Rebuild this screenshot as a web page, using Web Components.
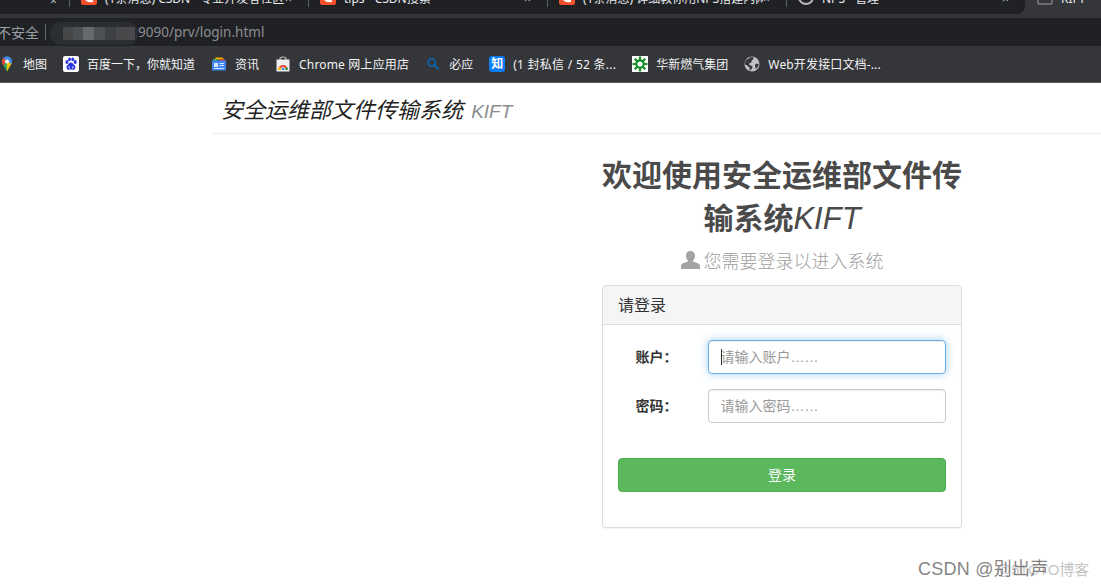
<!DOCTYPE html>
<html lang="zh-CN">
<head>
<meta charset="utf-8">
<title>KIFT</title>
<style>
  html, body { margin: 0; background: #fff; }
  body { height: 588px; overflow: hidden; font-family: "Liberation Sans", "Noto Sans CJK SC", sans-serif; }
</style>
</head>
<body>

<browser-chrome>
  <tab-strip>
    <browser-tab close>
      <csdn-icon slot="icon"></csdn-icon>
      (1条消息) CSDN - 专业开发者社区
    </browser-tab>
    <browser-tab close>
      <csdn-icon slot="icon"></csdn-icon>
      tips - CSDN搜索
    </browser-tab>
    <browser-tab close>
      <csdn-icon slot="icon"></csdn-icon>
      (1条消息) 详细教你用NPS搭建内网
    </browser-tab>
    <browser-tab close>
      <span slot="icon" class="globe"></span>
      NPS - 管理
    </browser-tab>
    <browser-tab slot="active" style="--w:76px">
      <span slot="icon" class="page"></span>
      KIFT
    </browser-tab>
  </tab-strip>
  <address-bar>9090/prv/login.html</address-bar>
  <bookmark-bar>
    <bookmark-item>
      <svg slot="icon" width="16" height="16" viewBox="0 0 16 16">
        <path d="M8 0.5C11 .5 13 2.8 13 5.5c0 1.6-.7 2.7-1.7 4L8 15.5 4.6 9.7C3.6 8.2 3 7 3 5.5 3 2.8 5 .5 8 .5z" fill="#34a853"/>
        <path d="M4.3 2l3 3.2L4.6 9.7C3.6 8.2 3 7 3 5.5 3 4.2 3.5 3 4.3 2z" fill="#ea4335"/>
        <path d="M4.3 2C5.2 1 6.5.5 8 .5c1.2 0 2.2.4 3 1L8 5z" fill="#4285f4"/>
        <path d="M11 1.500C12.300 2.500 13 3.900 13 5.500c0 .9-.2 1.600-.6 2.300L8 5z" fill="#4285f4"/>
        <path d="M8 5l4.400 2.800c-.2.500-.6 1.100-1.100 1.700L8 15.500V5z" fill="#fbbc04"/>
        <circle cx="8" cy="5.500" r="2" fill="#fff"/>
      </svg>
      地图
    </bookmark-item>
    <bookmark-item>
      <svg slot="icon" width="16" height="16" viewBox="0 0 16 16">
        <rect width="16" height="16" rx="2" fill="#fff"/>
        <g fill="#2932e1">
          <ellipse cx="4" cy="6" rx="1.500" ry="2"/>
          <ellipse cx="6.500" cy="3.300" rx="1.400" ry="1.900"/>
          <ellipse cx="9.800" cy="3.300" rx="1.400" ry="1.900"/>
          <ellipse cx="12.200" cy="6" rx="1.500" ry="2"/>
          <path d="M8 6.500c1.500 0 2 1.300 3 2.200 1.300 1.100 1.600 2 1.300 3.200-.3 1.400-1.500 2-2.700 1.800-.7-.1-1.100-.3-1.600-.3s-1 .2-1.700.3c-1.200.2-2.400-.4-2.700-1.800-.3-1.200 0-2.100 1.300-3.200 1-.9 1.500-2.200 3.100-2.200z"/>
        </g>
        <path d="M6 10v2.200M10 10v2.200M6 12.200h1M9 12.200h1" stroke="#fff" stroke-width=".8" fill="none"/>
      </svg>
      百度一下，你就知道
    </bookmark-item>
    <bookmark-item>
      <svg slot="icon" width="16" height="16" viewBox="0 0 16 16">
        <path d="M3 3.500L5 1.500h6.500L13 3.500z" fill="#f4b400"/>
        <path d="M2 3h5l-1 2H2z" fill="#34a853"/>
        <path d="M9 3h4.500l.5 2H9z" fill="#db4437"/>
        <rect x="1" y="4.500" width="14" height="10" rx="1" fill="#4285f4"/>
        <rect x="3" y="7" width="4" height="4" fill="#d2e3fc"/>
        <path d="M8.500 7.500H13M8.500 9.500H13M3 12.500h10" stroke="#d2e3fc" stroke-width="1"/>
      </svg>
      资讯
    </bookmark-item>
    <bookmark-item style="--ls:.17px">
      <svg slot="icon" width="16" height="16" viewBox="0 0 16 16">
        <path d="M5 4V2.500C5 1.500 6 1 8 1s3 .5 3 1.500V4" fill="none" stroke="#bdbdbd" stroke-width="1.200"/>
        <rect x="1.500" y="3.500" width="13" height="12" fill="#eeeeee"/>
        <path d="M3 14a5 5 0 0 1 10 0z" fill="#ea4335"/>
        <path d="M8 14H3a5 5 0 0 1 1.500-3.600L8 14z" fill="#fbbc04"/>
        <path d="M8 14h5a5 5 0 0 0-1-3L8 14z" fill="#34a853"/>
        <circle cx="8" cy="13" r="1.800" fill="#4285f4" stroke="#fff" stroke-width=".7"/>
      </svg>
      Chrome 网上应用店
    </bookmark-item>
    <bookmark-item>
      <svg slot="icon" width="16" height="16" viewBox="0 0 16 16">
        <circle cx="6.800" cy="6.500" r="3.600" fill="none" stroke="#0c63ad" stroke-width="1.700"/>
        <path d="M9.500 9.300l3.500 3.500" stroke="#0c63ad" stroke-width="2" stroke-linecap="round"/>
      </svg>
      必应
    </bookmark-item>
    <bookmark-item style="--ls:.27px">
      <zhi-mark slot="icon">知</zhi-mark>
      (1 封私信 / 52 条...
    </bookmark-item>
    <bookmark-item>
      <svg slot="icon" width="16" height="16" viewBox="0 0 16 16">
        <rect width="16" height="16" fill="#fff"/>
        <g fill="none" stroke="#0f8a1f">
          <circle cx="8" cy="8" r="3.700" stroke-width="2.200"/>
          <path d="M8 .5v3M8 12.500v3M.5 8h3M12.500 8h3M2.700 2.700l2.100 2.100M11.200 11.200l2.100 2.100M13.300 2.700l-2.100 2.100M4.800 11.200l-2.100 2.100" stroke-width="2.200"/>
        </g>
      </svg>
      华新燃气集团
    </bookmark-item>
    <bookmark-item style="--ls:.15px">
      <svg slot="icon" width="16" height="16" viewBox="0 0 16 16">
        <circle cx="8" cy="8" r="7.500" fill="#c0c2c5"/>
        <path d="M5.500 1.500C5 3 3.500 3.300 2.500 3.500 1.300 5 .8 6.800 1 8.500c1 .3 2.200.5 2.700 1.500.4.800 1.600.6 1.800 1.600.2.800-.2 2 .3 3 1 .2.800-1 1.600-1.700.8-.7 1.400-1.200 1-2.300C8 9.500 6 9.800 5.200 8.800 4.700 8 5.600 7 6.500 6.800c1-.2 1.400-1 1.200-1.800-.2-.7.800-1 1.400-1.400.6-.4.600-1.300.2-2.300-1.300-.3-2.700-.2-3.800.2z" fill="#35363a"/>
        <path d="M14.800 8c-1 0-2-.4-3 0-.9.400-1 1.400-.6 2.200.4.900 0 1.800.5 2.700 1.600-1.200 2.900-3 3.100-4.900z" fill="#35363a"/>
      </svg>
      Web开发接口文档-...
    </bookmark-item>
  </bookmark-bar>
</browser-chrome>

<kift-page>
  <site-header>安全运维部文件传输系统 <small>KIFT</small></site-header>
  <welcome-title>欢迎使用安全运维部文件传输系统<em>KIFT</em></welcome-title>
  <login-hint>您需要登录以进入系统</login-hint>
  <login-panel>
    <span slot="heading">请登录</span>
    <form-row label="账户：" focused>请输入账户……</form-row>
    <form-row label="密码：">请输入密码……</form-row>
    <submit-button>登录</submit-button>
  </login-panel>
</kift-page>

<water-mark></water-mark>

<script>
// 小工具：把模板字符串挂到 open shadow root 上
function mount(el, html) {
  el.attachShadow({ mode: 'open' }).innerHTML = html;
}

const UI_FONT = '"Noto Sans", "Noto Sans CJK SC", sans-serif';

class BrowserChrome extends HTMLElement {
  constructor() {
    super();
    mount(this, `
      <style>
        :host { display: block; background: #35363a; height: 83px; box-sizing: border-box; border-bottom: 1px solid #5a5b5e; font-family: ${UI_FONT}; }
      </style>
      <slot></slot>
    `);
  }
}

class TabStrip extends HTMLElement {
  constructor() {
    super();
    mount(this, `
      <style>
        :host { display: flex; height: 18px; align-items: flex-start; }
        .tabs {
          display: flex; align-items: flex-end; height: 14px; overflow: hidden;
          width: 1025px; padding-left: 69px; box-sizing: border-box;
          background: #202124; border-bottom-right-radius: 8px; position: relative;
        }
        .active { display: flex; align-items: flex-end; height: 14px; overflow: hidden; }
        .dots { position: absolute; left: 50px; top: -4px; color: #bdc1c6; font-size: 12px; line-height: 10px; }
      </style>
      <div class="tabs"><span class="dots">×</span><slot></slot></div>
      <div class="active"><slot name="active"></slot></div>
    `);
  }
}

class BrowserTab extends HTMLElement {
  constructor() {
    super();
    mount(this, `
      <style>
        :host {
          display: flex; align-items: center; flex: none; box-sizing: border-box;
          width: var(--w, 239px); height: 32px; padding-left: 12px;
          background: linear-gradient(#5f6368, #5f6368) left top / 1px 25px no-repeat;
          color: #e8eaed; font-size: 12px; white-space: nowrap; overflow: hidden;
        }
        :host([slot="active"]) { background: none; }
        .icon { flex: none; width: 16px; height: 16px; margin: 0 8px 2px 0; display: block; }
        .label { flex: 1; overflow: hidden; }
        .close { flex: none; width: 23px; color: #bdc1c6; }
        ::slotted(.globe) { display: block; width: 12px; height: 12px; border: 2px solid #b5b7ba; border-radius: 50%; }
        ::slotted(.page) { display: block; box-sizing: border-box; width: 16px; height: 16px; border: 2px solid #6a6c70; border-radius: 2px; }
      </style>
      <span class="icon"><slot name="icon"></slot></span>
      <span class="label"><slot></slot></span>
      ${this.hasAttribute('close') ? '<span class="close">×</span>' : ''}
    `);
  }
}

class CsdnIcon extends HTMLElement {
  constructor() {
    super();
    mount(this, `
      <style>
        :host { display: block; width: 16px; height: 16px; }
        svg { display: block; }
      </style>
      <svg width="16" height="16" viewBox="0 0 16 16">
        <rect width="16" height="16" rx="2" fill="#f4502d"/>
        <path d="M12 4.500C9 3.500 4.500 4 4.500 8s4 4.800 7.500 3.700" fill="none" stroke="#fff" stroke-width="2.200"/>
      </svg>
    `);
  }
}

class AddressBar extends HTMLElement {
  constructor() {
    super();
    mount(this, `
      <style>
        :host {
          display: flex; align-items: center; height: 28px; background: #202124;
          color: #8b8e92; font-size: 13.5px; white-space: nowrap; overflow: hidden;
        }
        .secure { font-size: 14px; color: #9aa0a6; margin-left: -3px; }
        .bar { width: 1px; height: 16px; background: #5f6368; margin: 0 3px 0 6px; flex: none; }
        svg { flex: none; display: block; margin-top: 3px; }
        .url { margin: 0 0 0 -1px; }
      </style>
      <span class="secure">不安全</span>
      <span class="bar"></span>
      <svg width="90" height="25" viewBox="0 0 90 25">
        <filter id="soft"><feGaussianBlur stdDeviation=".7"/></filter>
        <g filter="url(#soft)">
          <rect x="1" y="1" width="88" height="23" rx="11" fill="#2a2d30"/>
          <rect x="14" y="6" width="10" height="13" fill="#45474a"/>
          <rect x="24" y="6" width="10" height="13" fill="#4b5154"/>
          <rect x="34" y="6" width="11" height="13" fill="#68696a"/>
          <rect x="45" y="6" width="11" height="13" fill="#4e5153"/>
          <rect x="56" y="6" width="11" height="13" fill="#3e4143"/>
          <rect x="67" y="6" width="11" height="13" fill="#484a4c"/>
          <rect x="78" y="6" width="8" height="13" fill="#4a4a4b"/>
        </g>
      </svg>
      <span class="url"><slot></slot></span>
    `);
  }
}

class BookmarkBar extends HTMLElement {
  constructor() {
    super();
    mount(this, `
      <style>
        :host { display: flex; align-items: center; height: 36px; margin-left: -9px; }
      </style>
      <slot></slot>
    `);
  }
}

class BookmarkItem extends HTMLElement {
  constructor() {
    super();
    mount(this, `
      <style>
        :host {
          display: flex; align-items: center; gap: 8px; padding: 0 8px; flex: none;
          color: #f1f3f4; font-size: 12px; line-height: 16px; white-space: nowrap;
        }
        .icon { display: block; width: 16px; height: 16px; }
        .text { padding-top: 1px; letter-spacing: var(--ls, 0); }
        ::slotted(svg) { display: block; }
      </style>
      <span class="icon"><slot name="icon"></slot></span>
      <span class="text"><slot></slot></span>
    `);
  }
}

class ZhiMark extends HTMLElement {
  constructor() {
    super();
    mount(this, `
      <style>
        :host {
          display: block; width: 16px; height: 16px; border-radius: 3px; background: #0a7cf5;
          color: #fff; font-size: 12px; line-height: 16px; text-align: center; font-weight: 700; letter-spacing: 0;
        }
      </style>
      <slot></slot>
    `);
  }
}

class KiftPage extends HTMLElement {
  constructor() {
    super();
    mount(this, `
      <style>
        :host { display: block; padding-left: 212px; color: #333; font-size: 14px; }
        .col { width: 360px; margin-left: 390px; }
      </style>
      <slot name="top"></slot>
      <div class="col"><slot></slot></div>
    `);
  }
  connectedCallback() {
    const header = this.querySelector('site-header');
    if (header) header.slot = 'top';
  }
}

class SiteHeader extends HTMLElement {
  constructor() {
    super();
    mount(this, `
      <style>
        :host {
          display: flex; align-items: center; height: 51px; box-sizing: border-box; padding: 0 0 0 9px;
          border-bottom: 1px solid #eee; color: #222; font-size: 22px; font-style: italic; white-space: pre;
        }
        ::slotted(small) { font-size: 19px; color: #8c8c8c; margin-left: 2px; }
      </style>
      <span><slot></slot></span>
    `);
  }
}

class WelcomeTitle extends HTMLElement {
  constructor() {
    super();
    mount(this, `
      <style>
        :host { display: block; margin-top: 20px; font-size: 30px; line-height: 43px; font-weight: 700; text-align: center; color: #4a4a4a; }
        ::slotted(em) { font-weight: 400; font-style: italic; font-size: 31px; }
      </style>
      <slot></slot>
    `);
  }
}

class LoginHint extends HTMLElement {
  constructor() {
    super();
    mount(this, `
      <style>
        :host {
          display: flex; justify-content: center; align-items: center; gap: 4px;
          height: 24px; margin: 8px 0 13px; font-size: 18px; color: #9e9e9e; font-weight: 300;
        }
        svg { display: block; flex: none; margin-top: -1px; }
      </style>
      <svg width="19" height="18" viewBox="0 0 18 18" preserveAspectRatio="none">
        <path fill="#a3a3a3" d="M9 0c2.700 0 4.300 2 4.300 4.700 0 2-.7 3.600-1.800 4.700-.3.400-.2 1 .3 1.300 2.200.8 5.700 1.600 6.200 3.600V18H0v-3.700c.5-2 4-2.800 6.200-3.600.5-.3.6-.9.300-1.300C5.400 8.300 4.700 6.700 4.700 4.700 4.700 2 6.300 0 9 0z"/>
      </svg>
      <span><slot></slot></span>
    `);
  }
}

class LoginPanel extends HTMLElement {
  constructor() {
    super();
    mount(this, `
      <style>
        :host {
          display: block; box-sizing: border-box; height: 243px; background: #fff;
          border: 1px solid #ddd; border-radius: 4px; box-shadow: 0 1px 1px rgba(0,0,0,.05);
        }
        .heading {
          height: 39px; box-sizing: border-box; padding: 0 15px 2px; background: #f5f5f5;
          border-bottom: 1px solid #ddd; border-radius: 3px 3px 0 0;
          display: flex; align-items: center; font-size: 16px; color: #333;
        }
        .body { padding: 15px; display: flex; flex-direction: column; gap: 15px; }
      </style>
      <div class="heading"><slot name="heading"></slot></div>
      <div class="body"><slot></slot></div>
    `);
  }
}

class FormRow extends HTMLElement {
  constructor() {
    super();
    const focused = this.hasAttribute('focused');
    mount(this, `
      <style>
        :host { display: grid; grid-template-columns: 59.5px 1fr; column-gap: 30px; align-items: center; }
        label { text-align: right; font-size: 14px; font-weight: 700; color: #333; white-space: nowrap; padding-bottom: 2px; }
        .field {
          box-sizing: border-box; height: 34px; padding: 0 12px 2px; display: flex; align-items: center; position: relative;
          border: 1px solid #ccc; border-radius: 4px; color: #999; font-size: 14px; background: #fff;
          box-shadow: inset 0 1px 1px rgba(0,0,0,.075);
        }
        .field.focused {
          border-color: #66afe9;
          box-shadow: inset 0 1px 1px rgba(0,0,0,.075), 0 0 8px rgba(102,175,233,.6);
        }
        .caret { position: absolute; left: 12px; top: 8px; width: 1px; height: 16px; background: #333; }
      </style>
      <label>${this.getAttribute('label')}</label>
      <div class="field ${focused ? 'focused' : ''}">${focused ? '<i class="caret"></i>' : ''}<span><slot></slot></span></div>
    `);
  }
}

class SubmitButton extends HTMLElement {
  constructor() {
    super();
    mount(this, `
      <style>
        :host { display: block; margin-top: 20px; }
        button {
          display: block; width: 100%; height: 34px; padding: 0 0 2px; cursor: pointer;
          background: #5cb85c; border: 1px solid #4cae4c; border-radius: 4px;
          color: #fff; font: 14px "Liberation Sans", "Noto Sans CJK SC", sans-serif;
        }
      </style>
      <button type="button"><slot></slot></button>
    `);
  }
}

class WaterMark extends HTMLElement {
  constructor() {
    super();
    mount(this, `
      <style>
        :host { position: absolute; left: 918px; top: 557px; width: 183px; height: 24px; pointer-events: none; white-space: nowrap; }
        .a { position: absolute; left: 0; top: 0; font-size: 18px; line-height: 24px; letter-spacing: .25px; color: rgba(110,110,110,.85); }
        .b { position: absolute; left: 78px; top: 3px; font-size: 15px; line-height: 20px; color: rgba(170,170,170,.7); }
      </style>
      <span class="b">@51CTO博客</span>
      <span class="a">CSDN @别出声</span>
    `);
  }
}

customElements.define('browser-chrome', BrowserChrome);
customElements.define('tab-strip', TabStrip);
customElements.define('browser-tab', BrowserTab);
customElements.define('csdn-icon', CsdnIcon);
customElements.define('address-bar', AddressBar);
customElements.define('bookmark-bar', BookmarkBar);
customElements.define('bookmark-item', BookmarkItem);
customElements.define('zhi-mark', ZhiMark);
customElements.define('kift-page', KiftPage);
customElements.define('site-header', SiteHeader);
customElements.define('welcome-title', WelcomeTitle);
customElements.define('login-hint', LoginHint);
customElements.define('login-panel', LoginPanel);
customElements.define('form-row', FormRow);
customElements.define('submit-button', SubmitButton);
customElements.define('water-mark', WaterMark);
</script>
</body>
</html>
